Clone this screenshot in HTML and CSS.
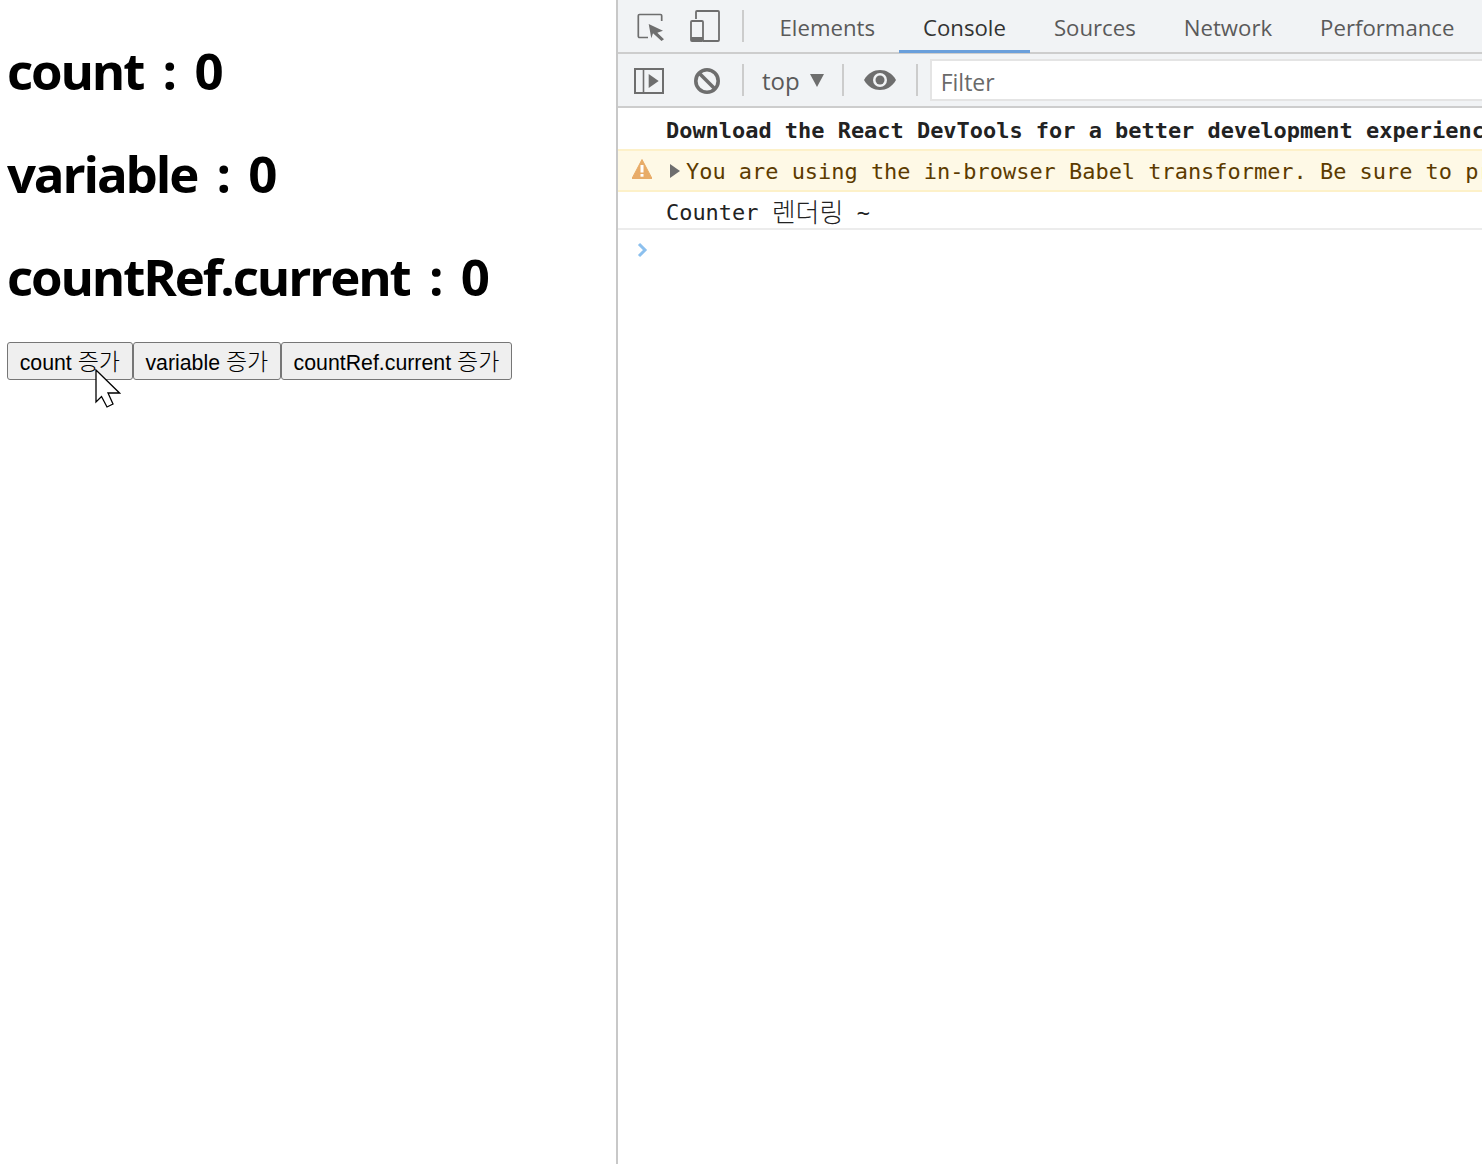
FILE: index.html
```html
<!DOCTYPE html>
<html lang="ko">
<head>
<meta charset="utf-8">
<title>Counter</title>
<link rel="stylesheet" href="styles.css">
</head>
<body>
<main class="page">
  <section class="app">
    <h1 class="line">count : 0</h1>
    <h1 class="line">variable : 0</h1>
    <h1 class="line">countRef.current : 0</h1>
    <div class="buttons">
      <button class="btn">count <span class="ko">증가</span></button><button class="btn">variable <span class="ko">증가</span></button><button class="btn">countRef.current <span class="ko">증가</span></button>
    </div>
    <svg class="cursor" width="26" height="40" viewBox="0 0 26 40"><path d="M1 1V33L6.500 27.500L12 38L18 35L13 24H24.500Z" fill="#fff" stroke="#000" stroke-width="1.300" stroke-linejoin="miter"/></svg>
  </section>
  <section class="devtools">
    <div class="tabbar">
      <div class="iconset first">
        <svg class="ic" width="30" height="30" viewBox="0 0 30 30"><path d="M12 26.500H3.500a1.200 1.200 0 0 1-1.200-1.200V4.700a1.200 1.200 0 0 1 1.200-1.200H24.500a1.200 1.200 0 0 1 1.200 1.200V10" fill="none" stroke="#6e6e6e" stroke-width="1.700"/><path d="M12.700 13L27 19.700L21.300 21.700L28 28.300L25.500 30L17 22.300L15.300 27.300Z" fill="#6e6e6e"/></svg>
        <svg class="ic" width="32" height="34" viewBox="0 0 32 34"><path d="M7 10V3a1 1 0 0 1 1-1h21a1 1 0 0 1 1 1v28a1 1 0 0 1-1 1H14" fill="none" stroke="#6e6e6e" stroke-width="1.800"/><rect x="2" y="12" width="12" height="20" rx="1" fill="none" stroke="#6e6e6e" stroke-width="1.800"/><rect x="2" y="28" width="12" height="4" fill="#6e6e6e"/></svg>
      </div>
      <span class="sep"></span>
      <nav class="tabs">
        <span class="tab">Elements</span>
        <span class="tab active">Console</span>
        <span class="tab">Sources</span>
        <span class="tab">Network</span>
        <span class="tab">Performance</span>
      </nav>
    </div>
    <div class="toolbar">
      <svg class="tool-a" width="30" height="28" viewBox="0 0 30 28"><rect x="1" y="3" width="28" height="24" fill="none" stroke="#6e6e6e" stroke-width="2"/><path d="M9.500 3V27" stroke="#6e6e6e" stroke-width="1.600"/><path d="M14.700 8L24.700 15L14.700 22Z" fill="#6e6e6e"/></svg>
      <svg class="tool-b" width="28" height="28" viewBox="0 0 28 28"><circle cx="14" cy="14" r="11.200" fill="none" stroke="#6e6e6e" stroke-width="3.600"/><path d="M6.500 6.500L21.500 21.500" stroke="#6e6e6e" stroke-width="3.600"/></svg>
      <span class="sep s2"></span>
      <span class="ctx">top</span>
      <svg class="caret" width="14" height="13" viewBox="0 0 14 13"><path d="M0 0H14L7 13Z" fill="#6e6e6e"/></svg>
      <span class="sep s3"></span>
      <svg class="eye" width="32" height="22" viewBox="0 0 32 22"><path d="M0 11C4 4 10 1 16 1S28 4 32 11C28 18 22 21 16 21S4 18 0 11Z" fill="#6e6e6e"/><circle cx="16" cy="11" r="7" fill="#f1f3f5"/><circle cx="16" cy="11" r="4.500" fill="#6e6e6e"/></svg>
      <span class="sep s4"></span>
      <div class="filter">Filter</div>
    </div>
    <div class="console">
      <div class="msg bold">Download the React DevTools for a better development experience</div>
      <div class="msg warn">
        <svg class="warn-ic" width="20" height="20" viewBox="0 0 20 20"><path d="M10 0.500L20 19.500H0Z" fill="#e8ac68" stroke="#e8ac68" stroke-linejoin="round"/><rect x="8.500" y="6" width="3" height="7.500" fill="#fff"/><rect x="8.500" y="15" width="3" height="2.700" fill="#fff"/></svg>
        <svg class="tri" width="10" height="14" viewBox="0 0 10 14"><path d="M0 0L10 7L0 14Z" fill="#6e6e6e"/></svg>
        <span class="warn-text">You are using the in-browser Babel transformer. Be sure to precompile your scripts for production</span>
      </div>
      <div class="msg log">Counter <span class="ko-log">렌더링</span> ~</div>
      <div class="prompt"><svg width="11" height="16" viewBox="0 0 11 16"><path d="M2 2L8 8L2 14" fill="none" stroke="#8cc0ee" stroke-width="3"/></svg></div>
    </div>
  </section>
</main>
</body>
</html>
```
FILE: styles.css
```css
* { box-sizing: border-box; }
html, body { margin: 0; height: 100%; overflow: hidden; background: #fff; }
.page { display: flex; height: 1164px; width: 1482px; }

.app {
  position: relative;
  width: 616px;
  flex: none;
  padding: 0 7px;
  font-family: "Open Sans", "Noto Sans CJK KR", sans-serif;
}
.line {
  margin: 0;
  height: 103px;
  padding-top: 35px;
  font-size: 51px;
  line-height: 70px;
  font-weight: 700;
  color: #000;
  letter-spacing: -2.150px;
  word-spacing: 8.300px;
  white-space: nowrap;
}
.buttons { display: flex; margin-top: 33px; }
.btn {
  height: 38px;
  padding: 0 11.700px 4px;
  border: 1px solid #767676;
  border-radius: 3px;
  background: #efefef;
  color: #000;
  font-family: "Liberation Sans", "Noto Sans CJK KR", sans-serif;
  font-size: 21.300px;
  white-space: nowrap;
}
.ko { font-size: 23px; font-weight: 300; }
.cursor { position: absolute; left: 95px; top: 369px; }

.devtools {
  flex: 1;
  min-width: 0;
  border-left: 2px solid #c8c8c8;
  overflow: hidden;
  font-family: "Open Sans", "Noto Sans CJK KR", sans-serif;
}
.tabbar {
  display: flex;
  align-items: center;
  height: 54px;
  background: #f1f3f5;
  border-bottom: 2px solid #cdcdcd;
}
.iconset { display: flex; align-items: center; gap: 23px; padding-left: 18px; }
.sep { width: 2px; height: 32px; background: #ccc; flex: none; }
.tabbar .sep { margin: 0 11.500px 0 21px; height: 32px; }
.tabs { display: flex; height: 54px; }
.tab {
  height: 54px;
  padding: 0 24px;
  line-height: 58px;
  font-size: 22.200px;
  color: #5a5a5a;
  white-space: nowrap;
}
.tab.active { color: #333; border-bottom: 3px solid #6a9fdb; }

.toolbar {
  display: flex;
  align-items: center;
  height: 54px;
  background: #f1f3f5;
  border-bottom: 2px solid #cdcdcd;
  white-space: nowrap;
}
.tool-a { margin-left: 16px; flex: none; }
.tool-b { margin: 2px 0 0 29px; flex: none; }
.s2 { margin-left: 21px; }
.ctx { margin-left: 18px; font-size: 24px; color: #5a5a5a; line-height: 32px; padding-top: 2px; }
.caret { margin: 1px 0 0 10px; flex: none; }
.s3 { margin-left: 18px; }
.eye { margin-left: 20px; flex: none; }
.s4 { margin-left: 20px; }
.filter {
  flex: 1;
  margin-left: 12px;
  height: 42px;
  background: #fff;
  border: 2px solid #e4e4e4;
  border-right: 0;
  padding-left: 9px;
  font-size: 23px;
  line-height: 42px;
  color: #6a6a6a;
}

.console { font-family: "DejaVu Sans Mono", "Noto Sans CJK KR", monospace; font-size: 21.950px; }
.msg { white-space: nowrap; padding-left: 48px; }
.bold { height: 41px; line-height: 46px; font-weight: 700; color: #222; }
.warn {
  display: flex;
  align-items: center;
  height: 43px;
  padding-left: 0;
  background: #fef9e6;
  border-top: 2px solid #fdf1c9;
  border-bottom: 2px solid #fdf1c9;
  color: #5c3b00;
}
.warn-ic { margin: -3px 0 0 14px; flex: none; }
.tri { margin-left: 18px; flex: none; }
.warn-text { margin-left: 6px; padding-top: 2px; }
.log { height: 38px; line-height: 41px; color: #222; border-bottom: 2px solid #ececec; }
.ko-log { font-size: 26px; font-weight: 300; line-height: 30px; vertical-align: -2px; }
.prompt { padding: 8px 0 0 19px; }
```
